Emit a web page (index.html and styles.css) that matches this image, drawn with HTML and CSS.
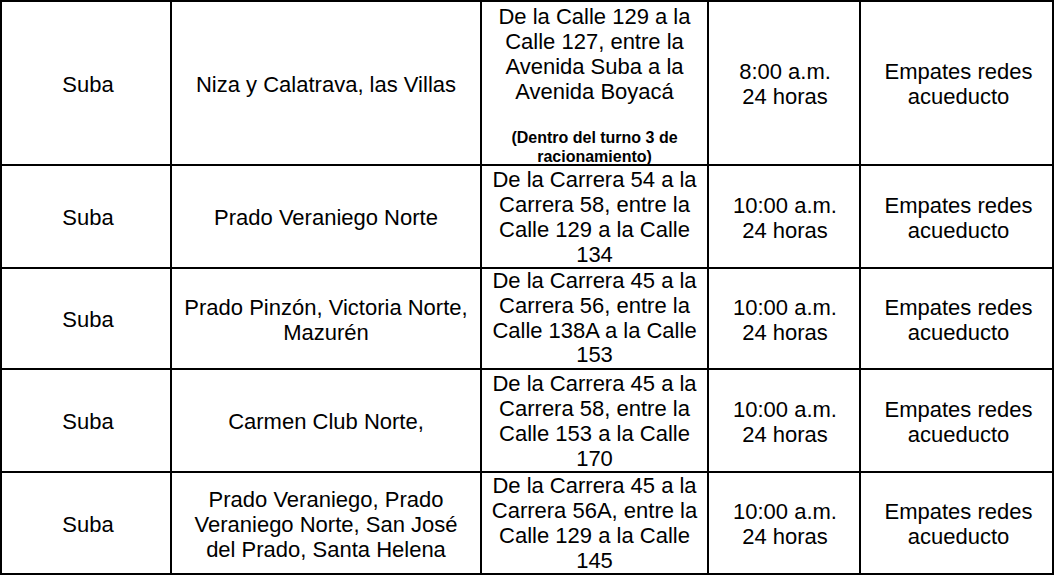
FILE: index.html
```html
<!DOCTYPE html>
<html lang="es">
<head>
<meta charset="utf-8">
<title>Cortes de agua - Suba</title>
<link rel="stylesheet" href="styles.css">
</head>
<body>
<table class="cortes">
  <tbody>
    <tr class="r1">
      <td class="c1">Suba</td>
      <td class="c2">Niza y Calatrava, las Villas</td>
      <td class="c3">
        <div>De la Calle 129 a la Calle 127, entre la Avenida Suba a la Avenida Boyacá</div>
        <div class="note">(Dentro del turno 3 de racionamiento)</div>
      </td>
      <td class="c4">8:00 a.m.<br>24 horas</td>
      <td class="c5">Empates redes acueducto</td>
    </tr>
    <tr class="r2">
      <td>Suba</td>
      <td>Prado Veraniego Norte</td>
      <td>De la Carrera 54 a la Carrera 58, entre la Calle 129 a la Calle 134</td>
      <td>10:00 a.m.<br>24 horas</td>
      <td>Empates redes acueducto</td>
    </tr>
    <tr class="r3">
      <td>Suba</td>
      <td>Prado Pinzón, Victoria Norte, Mazurén</td>
      <td>De la Carrera 45 a la Carrera 56, entre la Calle 138A a la Calle 153</td>
      <td>10:00 a.m.<br>24 horas</td>
      <td>Empates redes acueducto</td>
    </tr>
    <tr class="r4">
      <td>Suba</td>
      <td>Carmen Club Norte,</td>
      <td>De la Carrera 45 a la Carrera 58, entre la Calle 153 a la Calle 170</td>
      <td>10:00 a.m.<br>24 horas</td>
      <td>Empates redes acueducto</td>
    </tr>
    <tr class="r5">
      <td>Suba</td>
      <td>Prado Veraniego, Prado Veraniego Norte, San José del Prado, Santa Helena</td>
      <td>De la Carrera 45 a la Carrera 56A, entre la Calle 129 a la Calle 145</td>
      <td>10:00 a.m.<br>24 horas</td>
      <td>Empates redes acueducto</td>
    </tr>
  </tbody>
</table>
</body>
</html>
```
FILE: styles.css
```css
html, body {
  margin: 0;
  padding: 0;
  background: #ffffff;
}

body {
  font-family: "Liberation Sans", Arial, sans-serif;
  color: #000000;
  overflow: hidden;
}

.cortes {
  table-layout: fixed;
  width: 1054px;
  border-collapse: separate;
  border-spacing: 0;
  border-top: 2px solid #000;
  border-left: 2px solid #000;
}

.cortes td {
  box-sizing: border-box;
  border-right: 2px solid #000;
  border-bottom: 2px solid #000;
  padding: 2px 8px 0 8px;
  text-align: center;
  vertical-align: middle;
  font-size: 22px;
  line-height: 25px;
  overflow: hidden;
}

.cortes td:first-child,
.cortes td:last-child {
  padding-left: 10px;
  padding-right: 6px;
}

.cortes td:nth-child(4) {
  padding-left: 9px;
  padding-right: 7px;
}

.cortes td:nth-child(3) {
  padding-top: 0;
}

.cortes .c1 { width: 170px; }
.cortes .c2 { width: 310px; }
.cortes .c3 { width: 227px; }
.cortes .c4 { width: 152px; }
.cortes .c5 { width: 193px; }

.r1 td { height: 164px; }
.r2 td { height: 103px; }
.r3 td { height: 101px; }
.r4 td { height: 103px; }
.r5 td { height: 102px; }

.r3 td:nth-child(3) {
  line-height: 24.75px;
}

.r1 td.c3 {
  padding-top: 2px;
}

.note {
  margin-top: 24px;
  margin-bottom: -2px;
  font-size: 16px;
  font-weight: bold;
  line-height: 19px;
}
```
